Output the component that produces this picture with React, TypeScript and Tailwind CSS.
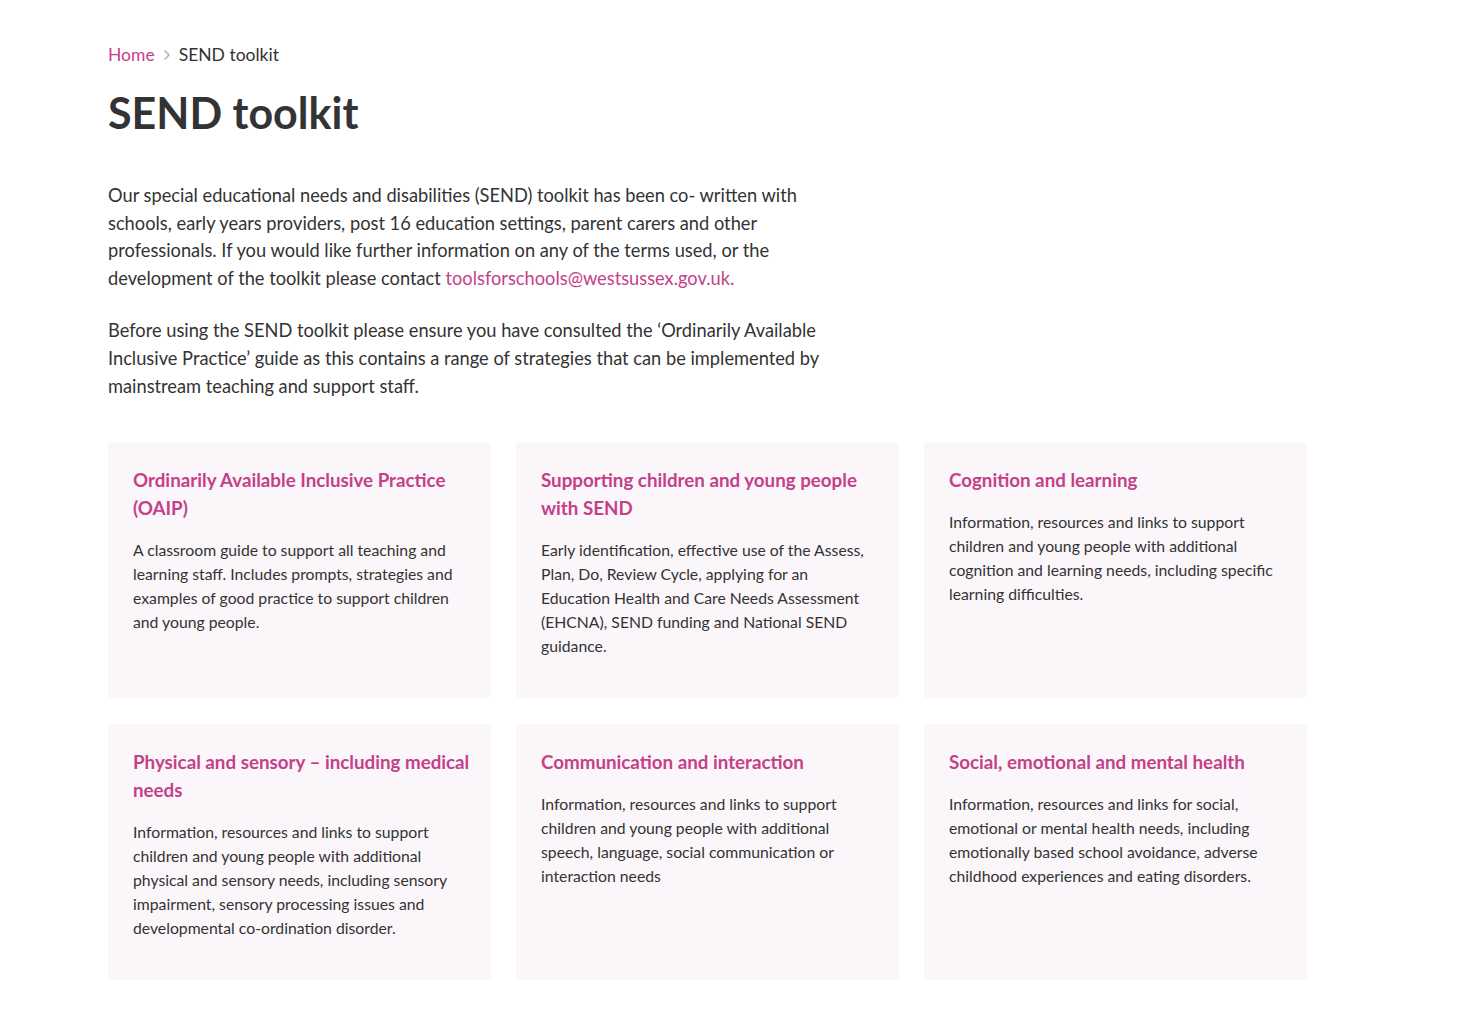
const cards = [
  {
    title: "Ordinarily Available Inclusive Practice (OAIP)",
    text: "A classroom guide to support all teaching and learning staff. Includes prompts, strategies and examples of good practice to support children and young people.",
  },
  {
    title: "Supporting children and young people with SEND",
    text: "Early identification, effective use of the Assess, Plan, Do, Review Cycle, applying for an Education Health and Care Needs Assessment (EHCNA), SEND funding and National SEND guidance.",
  },
  {
    title: "Cognition and learning",
    text: "Information, resources and links to support children and young people with additional cognition and learning needs, including specific learning difficulties.",
  },
  {
    title: "Physical and sensory – including medical needs",
    text: "Information, resources and links to support children and young people with additional physical and sensory needs, including sensory impairment, sensory processing issues and developmental co-ordination disorder.",
  },
  {
    title: "Communication and interaction",
    text: "Information, resources and links to support children and young people with additional speech, language, social communication or interaction needs",
  },
  {
    title: "Social, emotional and mental health",
    text: "Information, resources and links for social, emotional or mental health needs, including emotionally based school avoidance, adverse childhood experiences and eating disorders.",
  },
];

export default function App() {
  return (
    <main className="min-h-screen bg-white text-[#333333] font-['Lato','Liberation_Sans',sans-serif]">
      <div className="px-[108px] pt-[43px] pb-10">
        <nav className="flex items-center gap-[8px] text-[17.5px] leading-[24px]">
          <a href="#" className="text-[#c4418a]">
            Home
          </a>
          <svg width="8" height="12" viewBox="0 0 8 12" fill="none">
            <path d="M1.5 1.5L6 6l-4.5 4.5" stroke="#b5b5b5" strokeWidth="1.5" />
          </svg>
          <span className="text-[#333333]">SEND toolkit</span>
        </nav>

        <h1 className="mt-[20px] text-[43px] leading-[52px] font-bold text-[#333333]">
          SEND toolkit
        </h1>

        <div className="mt-[43px] max-w-[720px] text-[18.25px] leading-[27.6px]">
          <p>
            Our special educational needs and disabilities (SEND) toolkit has
            been co- written with schools, early years providers, post 16
            education settings, parent carers and other professionals. If you
            would like further information on any of the terms used, or the
            development of the toolkit please contact{" "}
            <a href="#" className="text-[#c4418a]">
              toolsforschools@westsussex.gov.uk.
            </a>
          </p>
          <p className="mt-[25px]">
            Before using the SEND toolkit please ensure you have consulted the
            ‘Ordinarily Available Inclusive Practice’ guide as this contains a
            range of strategies that can be implemented by mainstream teaching
            and support staff.
          </p>
        </div>

        <div className="mt-[42px] grid w-[1199px] grid-cols-3 gap-x-[25px] gap-y-[26px]">
          {cards.map((card) => (
            <div
              key={card.title}
              className="h-[256px] rounded-[4px] bg-[#fbf6fa] px-[25px] pt-[24px]"
            >
              <h2 className="-mr-[10px] text-[18.75px] leading-[28px] font-bold text-[#c4418a]">
                {card.title}
              </h2>
              <p className="mt-[16px] text-[15.75px] leading-[24px] text-[#333333]">
                {card.text}
              </p>
            </div>
          ))}
        </div>
      </div>
    </main>
  );
}
